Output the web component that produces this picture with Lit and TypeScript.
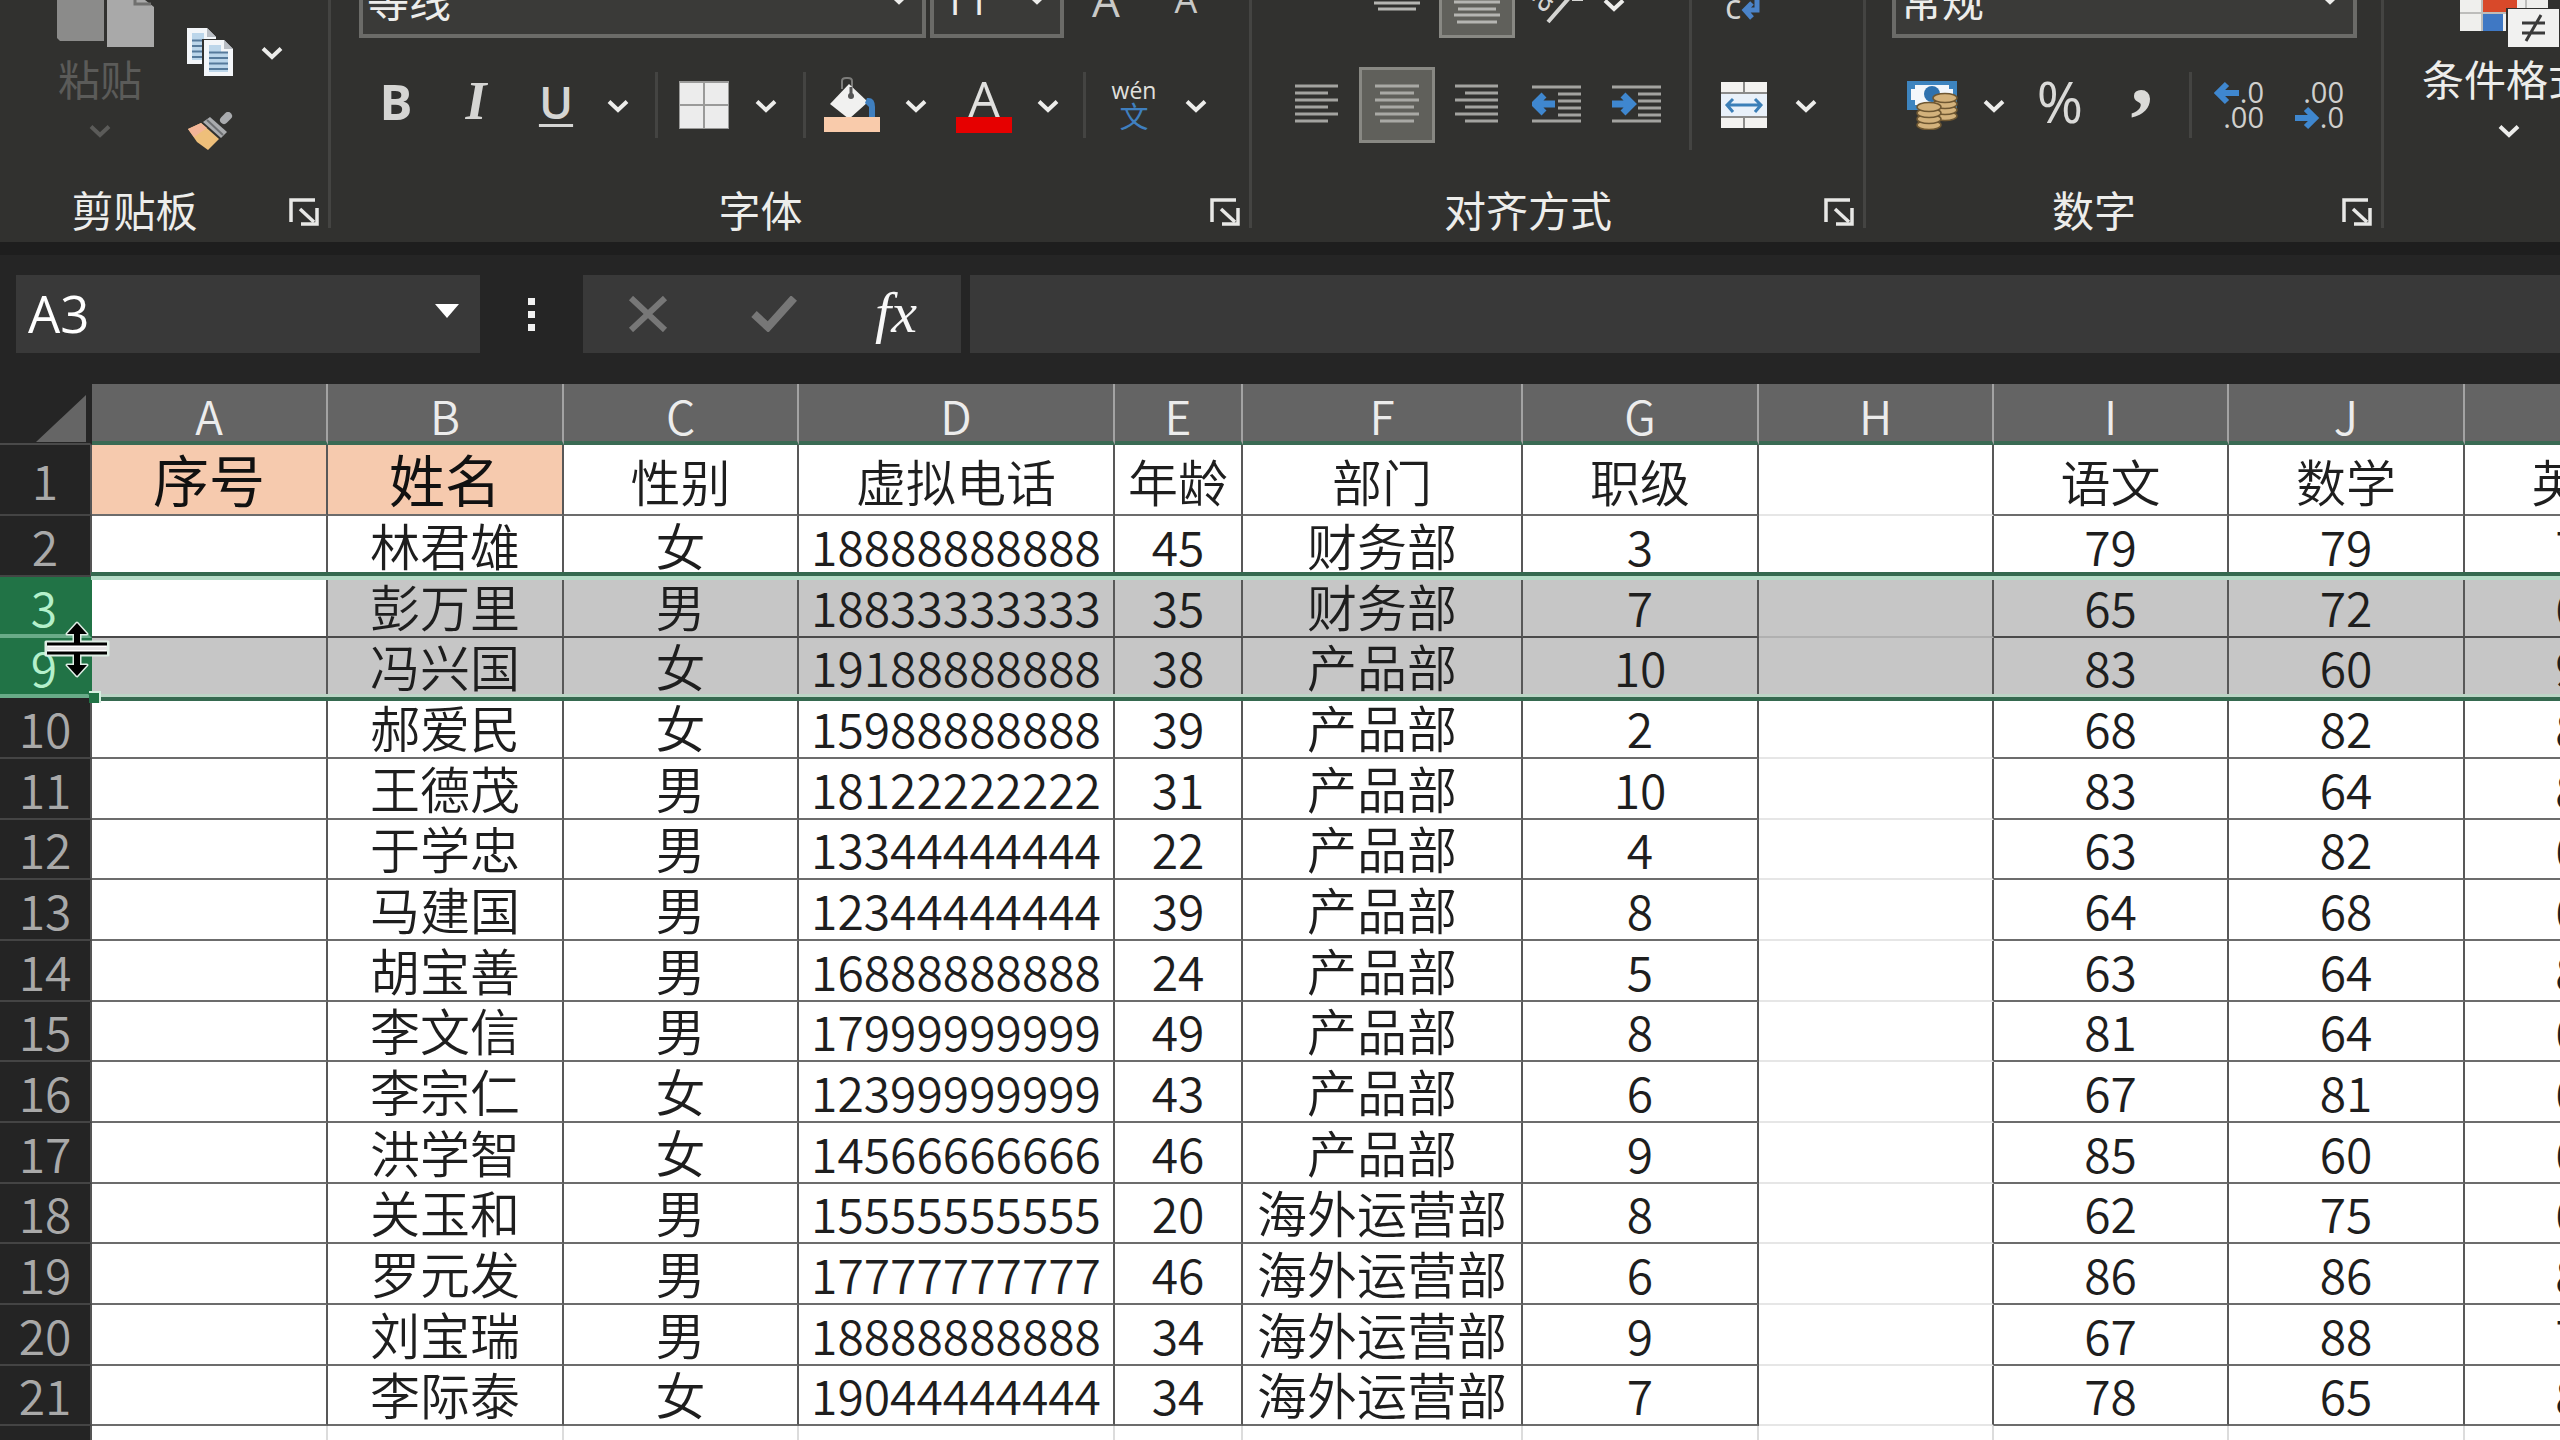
import { LitElement, html, css, svg, nothing } from "lit";
import { customElement } from "lit/decorators.js";
import { classMap } from "lit/directives/class-map.js";

type Row = { n: number; cells: (string | number)[] };

const COLUMNS = ["A", "B", "C", "D", "E", "F", "G", "H", "I", "J", "K"];

const ROWS: Row[] = [
  { n: 1, cells: ["序号", "姓名", "性别", "虚拟电话", "年龄", "部门", "职级", "", "语文", "数学", "英语"] },
  { n: 2, cells: ["", "林君雄", "女", "18888888888", 45, "财务部", 3, "", 79, 79, 74] },
  { n: 3, cells: ["", "彭万里", "男", "18833333333", 35, "财务部", 7, "", 65, 72, 65] },
  { n: 9, cells: ["", "冯兴国", "女", "19188888888", 38, "产品部", 10, "", 83, 60, 90] },
  { n: 10, cells: ["", "郝爱民", "女", "15988888888", 39, "产品部", 2, "", 68, 82, 83] },
  { n: 11, cells: ["", "王德茂", "男", "18122222222", 31, "产品部", 10, "", 83, 64, 82] },
  { n: 12, cells: ["", "于学忠", "男", "13344444444", 22, "产品部", 4, "", 63, 82, 66] },
  { n: 13, cells: ["", "马建国", "男", "12344444444", 39, "产品部", 8, "", 64, 68, 61] },
  { n: 14, cells: ["", "胡宝善", "男", "16888888888", 24, "产品部", 5, "", 63, 64, 85] },
  { n: 15, cells: ["", "李文信", "男", "17999999999", 49, "产品部", 8, "", 81, 64, 67] },
  { n: 16, cells: ["", "李宗仁", "女", "12399999999", 43, "产品部", 6, "", 67, 81, 62] },
  { n: 17, cells: ["", "洪学智", "女", "14566666666", 46, "产品部", 9, "", 85, 60, 68] },
  { n: 18, cells: ["", "关玉和", "男", "15555555555", 20, "海外运营部", 8, "", 62, 75, 64] },
  { n: 19, cells: ["", "罗元发", "男", "17777777777", 46, "海外运营部", 6, "", 86, 86, 81] },
  { n: 20, cells: ["", "刘宝瑞", "男", "18888888888", 34, "海外运营部", 9, "", 67, 88, 73] },
  { n: 21, cells: ["", "李际泰", "女", "19044444444", 34, "海外运营部", 7, "", 78, 65, 84] },
  { n: 22, cells: ["", "", "", "", "", "", "", "", "", "", ""] },
];

const SELECTED = [3, 9];

const icon = (w: number, h: number, body: unknown) =>
  html`<svg class="icon" width=${w} height=${h} viewBox="0 0 ${w} ${h}" aria-hidden="true">${body}</svg>`;

const chevron = () =>
  icon(22, 14, svg`<path d="M2 2.5 L11 11 L20 2.5" fill="none" stroke="currentColor" stroke-width="4"/>`);

const launcherIcon = icon(30, 28, svg`
  <path d="M2 24 V2 H26" fill="none" stroke="#e8e8e6" stroke-width="3.5"/>
  <path d="M11 11 L25 24" stroke="#e8e8e6" stroke-width="3.5"/>
  <path d="M28 10 V26 H12" fill="none" stroke="#e8e8e6" stroke-width="3.5"/>`);

const pasteIcon = icon(98, 48, svg`
  <path d="M0 0 H47 V41 H3 L0 38 Z" fill="#8b8b8a"/>
  <path d="M50 0 H88 L97 7 V47 H50 Z" fill="#a9a9a9"/>
  <path d="M78 0 V4 H94" fill="none" stroke="#70706f" stroke-width="3"/>`);

const page = (x: number, y: number) => svg`
  <path d="M${x} ${y} h20 l9 9 v27 h-29 z" fill="#f3f6f9"/>
  <path d="M${x + 20} ${y} v9 h9 z" fill="#b9bec4"/>
  <path d="M${x + 5} ${y + 5} h12 v7 h7 v20 h-19 z" fill="#bcd6ea"/>
  <path d="M${x + 5} ${y + 12.5} h19 M${x + 5} ${y + 18} h19 M${x + 5} ${y + 23.5} h19 M${x + 5} ${y + 29} h19"
    stroke="#567a9b" stroke-width="2"/>`;

const copyIcon = icon(48, 50, svg`${page(1, 1)}
  <path d="M16 12 h24 l8 8 v30 h-32 z" fill="#31312f"/>${page(18, 13)}`);

const brushIcon = icon(46, 40, svg`
  <path d="M37 8 L41 4" stroke="#a9abae" stroke-width="8" stroke-linecap="round"/>
  <path d="M23 5 L40 20 L34 26 L16 10 Z" fill="#a9abae"/>
  <path d="M20 8 L36 23" stroke="#6d6f72" stroke-width="2"/>
  <path d="M14 11 L32 27 L21 38 L10 30 L1 17 Z" fill="#eebf7a"/>
  <path d="M14 11 L20 16 L7 25 L1 17 Z" fill="#f3b597"/>`);

const bordersIcon = icon(50, 48, svg`
  <rect x="0" y="0" width="50" height="48" fill="#9a9a99"/>
  <rect x="1" y="2" width="23" height="21" fill="#ececec"/><rect x="26" y="2" width="23" height="21" fill="#ececec"/>
  <rect x="1" y="25" width="23" height="22" fill="#ececec"/><rect x="26" y="25" width="23" height="22" fill="#ececec"/>`);

const fillIcon = icon(58, 56, svg`
  <path d="M19 12 V4 Q19 1 23 1 H25 Q29 1 29 4 V14" fill="none" stroke="#7c7c7a" stroke-width="2"/>
  <path d="M26 7 L45 25 L26 42 L7 27 Z" fill="#f1f1f0"/>
  <path d="M28 10 V19" stroke="#555" stroke-width="3"/><circle cx="28" cy="19" r="3" fill="#555"/>
  <path d="M44 21 Q52 20 52 30 V40 H46 V30 L42 26 Z" fill="#3f7fbf"/>
  <rect x="1" y="40" width="56" height="15" fill="#f9cbab"/>`);

const fontColorIcon = icon(58, 56, svg`
  <text class="glyph" x="29" y="40" font-size="50" text-anchor="middle" fill="#e0e0de">A</text>
  <rect x="1" y="40" width="56" height="16" fill="#e60000"/>`);

const phoneticIcon = icon(54, 56, svg`
  <text class="glyph" x="27" y="22" font-size="23" text-anchor="middle" fill="#e0e0de">wén</text>
  <text class="cjk" x="27" y="51" font-size="29" text-anchor="middle" fill="#3f7fbf">文</text>`);

const lines = (w: number, spans: [number, number][], color: string, step = 7) =>
  icon(w, spans.length * step, spans.map(([a, b], i) =>
    svg`<path d="M${a} ${i * step + 2} H${b}" stroke=${color} stroke-width="3"/>`));

const leftLines = lines(44, [[0, 43], [0, 33], [0, 43], [0, 33], [0, 43], [0, 33]], "#a3a3a0");
const centerLines = lines(44, [[0, 44], [5, 39], [0, 44], [5, 39], [0, 44], [5, 39]], "#a9a9a5");
const rightLines = lines(44, [[0, 43], [10, 43], [0, 43], [10, 43], [0, 43], [10, 43]], "#a3a3a0");

const middleLines = icon(46, 76, svg`
  <path d="M0 34 H46 M0 41 H46 M4 47 H42" stroke="#b5b5b2" stroke-width="3"/>`);
const bottomLines = icon(46, 70, svg`
  <path d="M0 37 H46 M4 44 H42 M0 50 H46 M3 57 H43" stroke="#b5b5b2" stroke-width="3"/>`);

const indentIcon = (dir: "left" | "right") => icon(50, 40, svg`
  <path d="M0 2 H49 M26 9 H49 M26 16 H49 M26 23 H49 M26 30 H49 M0 36 H49" stroke="#a3a3a0" stroke-width="3"/>
  ${dir === "left"
    ? svg`<path d="M3 19 H23 M12 10 L3 19 L12 28" fill="none" stroke="#3f87cf" stroke-width="7"/>`
    : svg`<path d="M0 19 H20 M11 10 L20 19 L11 28" fill="none" stroke="#3f87cf" stroke-width="7"/>`}`);

const mergeIcon = icon(46, 46, svg`
  <rect width="46" height="46" fill="#f3f2f0"/>
  <path d="M0 11 H46 M0 35 H46 M23 0 V11 M23 35 V46" stroke="#8b8b8a" stroke-width="2"/>
  <rect y="12" width="46" height="22" fill="#e9f1fa"/>
  <path d="M6 23 H40 M12 17 L6 23 L12 30 M34 17 L40 23 L34 30" fill="none" stroke="#3b7fb8" stroke-width="3"/>`);

const orientIcon = icon(52, 76, svg`
  <text class="glyph" x="12" y="52" font-size="34" fill="#d5d5d3" transform="rotate(-50 12 52)">ab</text>
  <path d="M17 60 L52 20 M41 37 H52" fill="none" stroke="#d5d5d3" stroke-width="4"/>`);

const wrapIcon = icon(46, 76, svg`
  <text class="glyph" x="4" y="57" font-size="34" fill="#d5d5d3">c</text>
  <path d="M36 38 V48 H26 M31 41 L24 48 L31 56" fill="none" stroke="#4b83c9" stroke-width="5"/>`);

const coins = (x: number, y: number) => svg`
  ${[18, 12, 6, 0].map((d) => svg`<ellipse cx=${x} cy=${y + d} rx="12" ry="4.5" fill="#d3b27c" stroke="#6e5732" stroke-width="1.5"/>`)}`;

const currencyIcon = icon(52, 50, svg`
  <rect x="1" y="1" width="50" height="29" fill="#3d84bf"/>
  <path d="M9 5 H43 V9 H47 V20 H43 V25 H9 V20 H5 V9 H9 Z" fill="#f3f7fb"/>
  <ellipse cx="26" cy="14" rx="8" ry="8" fill="#2f72ae"/>
  ${coins(39, 18)}${coins(23, 27)}`);

const percentIcon = icon(52, 50, svg`
  <text class="glyph" x="26" y="43" font-size="56" text-anchor="middle" fill="#dadad8">%</text>`);

const commaIcon = icon(30, 50, svg`
  <text class="serif bold" x="15" y="23" font-size="92" text-anchor="middle" fill="#dadad8">,</text>`);

const decimalIcon = (kind: "more" | "less") => icon(52, 50, svg`
  <text class="glyph" x="50" y="23" font-size="29" text-anchor="end" fill="#cfcfcd">${kind === "more" ? ".0" : ".00"}</text>
  <text class="glyph" x="50" y="48" font-size="29" text-anchor="end" fill="#cfcfcd">${kind === "more" ? ".00" : ".0"}</text>
  <path d=${kind === "more" ? "M4 13 H25 M13 4 L4 13 L13 22" : "M1 38 H21 M12 29 L21 38 L12 47"}
    fill="none" stroke="#3f87cf" stroke-width="6"/>`);

const conditionalIcon = icon(102, 48, svg`
  <rect width="88" height="31" fill="#efefed"/>
  <rect x="23" width="34" height="13" fill="#d8492a"/><rect x="23" y="14" width="20" height="17" fill="#3f78c4"/>
  <path d="M0 13 H47 M22 0 V31 M66 0 V8" stroke="#bdbdbb" stroke-width="2"/>
  <rect x="46" y="8" width="53" height="40" fill="#31312f"/>
  <rect x="48" y="9" width="51" height="38" fill="#f1f1f0"/>
  <path d="M62 23 H85 M62 33 H85 M81 15 L66 41" stroke="#3a3a3a" stroke-width="3"/>`);

const cursorIcon = icon(66, 60, svg`
  <path d="M33 3 L43 14 H36 V22 H64 V35 H36 V45 H43 L33 56 L23 45 H30 V35 H2 V22 H30 V14 H23 Z"
    fill="#fff" stroke="#dfeee5" stroke-width="3" stroke-linejoin="round"/>
  <path d="M33 3 L43 14 H36 V23 H30 V14 H23 Z M33 56 L43 45 H36 V34 H30 V45 H23 Z" fill="#000"/>
  <path d="M3 24 H63 M3 33 H63" stroke="#000" stroke-width="3"/>
  <path d="M3 28.5 H63" stroke="#e6e6e6" stroke-width="3"/>`);

@customElement("ribbon-group")
class RibbonGroup extends LitElement {
  static properties = { label: {}, launcher: { type: Boolean } };
  declare label: string;
  declare launcher: boolean;

  static styles = css`
    :host { display: flex; flex-direction: column; flex: none; border-right: 3px solid #444442; height: 228px; }
    .body { height: 178px; flex: none; }
    .foot { display: flex; align-items: center; height: 62px; margin-bottom: -12px; padding-right: 9px; }
    .name { flex: 1; text-align: center; font-size: 42px; line-height: 62px; color: #ededeb; padding-right: 20px; }
    .launch { border: 0; background: none; padding: 6px 0 0; display: flex; }
    .icon { display: block; }
  `;

  render() {
    return html`<div class="body"><slot></slot></div>
      <div class="foot">
        <span class="name">${this.label}</span>
        ${this.launcher ? html`<button class="launch" aria-label="${this.label}设置">${launcherIcon}</button>` : nothing}
      </div>`;
  }
}

@customElement("app-root")
export class AppRoot extends LitElement {
  static styles = css`
    :host {
      display: flex; flex-direction: column; height: 100vh; overflow: hidden;
      background: #252525; color: #ededeb;
      font-family: "Noto Sans CJK SC", "Noto Sans", sans-serif;
    }
    button { border: 0; background: none; padding: 0; margin: 0; color: inherit; font: inherit; display: flex; align-items: center; justify-content: center; }
    .icon { display: block; flex: none; }
    .glyph { font-family: "Open Sans", "Noto Sans", sans-serif; }
    .cjk { font-family: "Noto Sans CJK SC", sans-serif; }
    .serif { font-family: "Liberation Serif", serif; }
    .bold { font-weight: 700; }

    .ribbon { display: flex; flex: none; height: 242px; overflow: hidden; background: #31312f; border-bottom: 13px solid #1e1e1e; }
    .g-clip { width: 328px; }
    .g-font { width: 918px; }
    .g-align { width: 611px; }
    .g-number { width: 515px; }
    .g-style { width: 230px; border-right: 0; }

    .clip { display: flex; height: 100%; }
    .paste { flex-direction: column; justify-content: flex-start; width: 116px; margin-left: 48px; color: #5b5b59; }
    .paste .cap, .cond .cap { font-size: 42px; line-height: 60px; }
    .paste .cap, .paste .chev { margin-right: 12px; }
    .paste .chev, .cond .chev { height: 14px; padding-top: 16px; }
    .clip-tools { display: grid; grid-template-columns: 92px 32px; grid-template-rows: 80px 80px; padding-top: 12px; place-items: center; align-content: start; }

    .top { display: flex; align-items: flex-end; height: 38px; }
    .tools { display: grid; align-items: center; justify-items: center; height: 76px; margin-top: 29px; }
    .font-body { padding-left: 28px; }
    .font-body .top { gap: 4px; }
    .font-tools { margin-left: -3px; grid-template-columns: 80px 80px 80px 44px 32px 64px 60px 16px 80px 48px 88px 40px 32px 68px 56px; }
    .num-body { padding-left: 26px; }
    .num-tools { grid-template-columns: 80px 44px 88px 76px 20px 80px 80px; }
    .align-body { display: flex; padding-left: 25px; }
    .align-tools { grid-template-columns: repeat(5, 80px); }
    .merge-tools { grid-template-columns: 80px 44px; }
    .vsep { width: 3px; height: 66px; background: #444442; }
    .vsep.tall { height: 150px; margin: 0 12px; }

    .combo { display: grid; align-items: center; height: 76px; box-sizing: border-box; border: 4px solid #6b6b68; background: #3a3a38; }
    .combo select { grid-area: 1 / 1; width: 100%; height: 68px; appearance: none; border: 0; background: none; color: #ededeb; font: inherit; font-size: 42px; padding: 0 0 4px 4px; }
    .combo .icon { grid-area: 1 / 1; justify-self: end; margin: 0 12px 4px 0; pointer-events: none; }
    .c-face { width: 567px; }
    .c-size { width: 134px; }
    .c-size select { font-family: "Open Sans", sans-serif; padding-left: 8px; }
    .c-num { width: 465px; }
    .grow, .shrink { width: 76px; height: 76px; font-family: "Open Sans", sans-serif; color: #c9c9c7; line-height: 60px; }
    .grow { font-size: 44px; }
    .shrink { font-size: 36px; line-height: 64px; }

    .t { width: 76px; height: 76px; }
    .t.on { box-sizing: border-box; border: 3px solid #888883; background: #60605b; }
    .slot { width: 80px; height: 76px; display: flex; align-items: center; justify-content: center; }
    .letter { font-family: "Open Sans", sans-serif; font-size: 49px; line-height: 64px; padding-bottom: 8px; color: #d5d5d3; }
    .letter.i { font-family: "Liberation Serif", serif; font-style: italic; font-weight: 700; font-size: 54px; padding-bottom: 8px; }
    .letter.u { font-weight: 600; text-decoration: underline; text-decoration-thickness: 3px; text-underline-offset: 5px; font-size: 46px; }
    .chev { height: 64px; padding-top: 2px; }
    .top .chev { padding: 0 6px 2px; }

    .cond { flex-direction: column; justify-content: flex-start; align-items: flex-start; padding-left: 38px; width: 230px; white-space: nowrap; }
    .cond .icon { margin-left: 38px; }
    .cond .chev .icon { margin-left: 76px; }

    .formula { display: flex; flex: none; height: 78px; padding: 20px 0 31px 16px; }
    .namebox { display: flex; align-items: center; justify-content: space-between; width: 464px; background: #393939; }
    .namebox input { flex: 1; min-width: 0; border: 0; background: none; color: #fff; font-family: "Open Sans", sans-serif; font-size: 51px; line-height: 64px; padding: 0 0 2px 12px; height: 78px; box-sizing: border-box; }
    .namebox button { width: 48px; padding: 0 18px 6px 0; height: 70px; }
    .grip { display: grid; gap: 6px; width: 103px; justify-content: center; align-content: center; }
    .grip i { width: 7px; height: 7px; background: #f1f1f1; }
    .fx { display: grid; grid-template-columns: repeat(3, 126px); background: #393939; color: #777; }
    .fx button { padding-left: 4px; }
    .fx .f { font-family: "Liberation Serif", serif; font-style: italic; font-size: 58px; line-height: 64px; color: #f8f8f8; padding: 0 4px 2px 0; }
    .bar { flex: 1; min-width: 0; margin-left: 9px; border: 0; background: #393939; color: #fff; font: inherit; font-size: 42px; }

    .sheet { position: relative; flex: 1; min-height: 0; overflow: hidden; background: #fff; }
    table { table-layout: fixed; width: 2699px; border-collapse: separate; border-spacing: 0; }
    col.rh { width: 92px; }
    col.w235 { width: 235px; }
    col.w236 { width: 236px; }
    col.w316 { width: 316px; }
    col.w128 { width: 128px; }
    col.w280 { width: 280px; }
    th, td { box-sizing: border-box; padding: 0; text-align: center; font-weight: 350; white-space: nowrap; line-height: 50px; }
    thead th { height: 61px; padding-top: 5px; background: #646464; color: #ececec; font-size: 46px; border-right: 2px solid #a3a3a3; border-bottom: 4px solid #3a6a54; }
    thead th.corner { padding: 0 4px 1px 0; background: #252525; border-bottom: 2px solid #4a4a4a; border-right: 2px solid #252525; vertical-align: bottom; }
    .corner .icon { margin-left: auto; }
    tbody th { background: #242424; color: #a9a9a9; font-size: 48px; border-right: 2px solid #555; border-bottom: 2px solid #444; padding-bottom: 2px; }
    tbody td { color: #1e1e1e; font-size: 48px; border-right: 2px solid #585858; border-bottom: 2px solid #6c6c6c; padding-bottom: 2px; }
    tbody td.han { font-size: 50px; padding-bottom: 4px; }
    tbody tr { height: 61px; }
    tbody tr:nth-child(3n + 1) { height: 60px; }
    tbody tr:first-child { height: 71px; }
    tbody td.head { padding-bottom: 0; }
    tbody td.key { background: #f6caae; font-size: 56px; font-weight: 400; color: #111; padding-bottom: 4px; }
    tbody td.gap { border-bottom-color: #e6e6e6; }
    tr.sel td { background: #c6c6c6; border-bottom-color: #4a4a4a; }
    tr.sel td.gap { border-bottom-color: #b0b0b0; }
    tr.sel td.active { background: #fff; }
    tr.sel th { background: #217346; color: #b4f0cb; border-right: 4px solid #217346; border-bottom: 4px solid #69ab88; padding-bottom: 0; }
    tr.blank td { border-color: #dcdcdc; }

    .range { position: absolute; left: 91px; right: 0; top: 188px; height: 121px; border: solid #35694f; border-width: 4px 0; box-shadow: inset 0 4px #b4dbc6, inset 0 -3px #bcd5c6; pointer-events: none; }
    .handle { position: absolute; left: -2px; bottom: -6px; width: 12px; height: 12px; background: #217346; border: solid #d5efe0; border-width: 2px 2px 0 0; box-sizing: border-box; }
    .cursor { position: absolute; left: 44px; top: 236px; pointer-events: none; }
  `;

  private chev(label: string) {
    return html`<button class="chev" aria-label=${label}>${chevron()}</button>`;
  }

  private tool(label: string, body: unknown, on = false) {
    return html`<button class=${classMap({ t: true, on })} aria-label=${label} aria-pressed=${on}>${body}</button>`;
  }

  private combo(cls: string, label: string, value: string) {
    return html`<label class="combo ${cls}"><select aria-label=${label}><option>${value}</option></select>${chevron()}</label>`;
  }

  private ribbon() {
    return html`<div class="ribbon">
      <ribbon-group class="g-clip" label="剪贴板" launcher>
        <div class="clip">
          <button class="paste">${pasteIcon}<span class="cap">粘贴</span><span class="chev">${chevron()}</span></button>
          <div class="clip-tools">
            <button aria-label="复制">${copyIcon}</button>${this.chev("复制选项")}
            <button aria-label="格式刷">${brushIcon}</button>
          </div>
        </div>
      </ribbon-group>

      <ribbon-group class="g-font" label="字体" launcher>
        <div class="font-body">
          <div class="top">
            ${this.combo("c-face", "字体名称", "等线")}
            ${this.combo("c-size", "字号", "11")}
            <button class="grow" aria-label="增大字号">A</button>
            <button class="shrink" aria-label="减小字号">A</button>
          </div>
          <div class="tools font-tools">
            <button class="letter bold">B</button>
            <button class="letter i">I</button>
            <button class="letter u">U</button>${this.chev("下划线选项")}
            <span class="vsep"></span>
            ${this.tool("边框", bordersIcon)}${this.chev("边框选项")}
            <span class="vsep"></span>
            ${this.tool("填充颜色", fillIcon)}${this.chev("填充颜色选项")}
            ${this.tool("字体颜色", fontColorIcon)}${this.chev("字体颜色选项")}
            <span class="vsep"></span>
            ${this.tool("拼音", phoneticIcon)}${this.chev("拼音选项")}
          </div>
        </div>
      </ribbon-group>

      <ribbon-group class="g-align" label="对齐方式" launcher>
        <div class="align-body">
          <div>
            <div class="top">
              <span class="slot"></span>
              <span class="slot">${this.tool("垂直居中", middleLines)}</span>
              <span class="slot">${this.tool("底端对齐", bottomLines, true)}</span>
              <span class="slot">${this.tool("方向", orientIcon)}</span>
              ${this.chev("方向选项")}
            </div>
            <div class="tools align-tools">
              ${this.tool("左对齐", leftLines)}
              ${this.tool("居中", centerLines, true)}
              ${this.tool("右对齐", rightLines)}
              ${this.tool("减少缩进量", indentIcon("left"))}
              ${this.tool("增加缩进量", indentIcon("right"))}
            </div>
          </div>
          <span class="vsep tall"></span>
          <div>
            <div class="top"><span class="slot">${this.tool("自动换行", wrapIcon)}</span></div>
            <div class="tools merge-tools">${this.tool("合并后居中", mergeIcon)}${this.chev("合并选项")}</div>
          </div>
        </div>
      </ribbon-group>

      <ribbon-group class="g-number" label="数字" launcher>
        <div class="num-body">
          <div class="top">${this.combo("c-num", "数字格式", "常规")}</div>
          <div class="tools num-tools">
            ${this.tool("会计数字格式", currencyIcon)}${this.chev("会计数字格式选项")}
            ${this.tool("百分比样式", percentIcon)}
            ${this.tool("千位分隔样式", commaIcon)}
            <span class="vsep"></span>
            ${this.tool("增加小数位数", decimalIcon("more"))}
            ${this.tool("减少小数位数", decimalIcon("less"))}
          </div>
        </div>
      </ribbon-group>

      <ribbon-group class="g-style" label="">
        <button class="cond">${conditionalIcon}<span class="cap">条件格式</span><span class="chev">${chevron()}</span></button>
      </ribbon-group>
    </div>`;
  }

  private formulaBar() {
    return html`<div class="formula">
      <div class="namebox">
        <input aria-label="名称框" value="A3" />
        <button aria-label="名称列表">${icon(24, 14, svg`<path d="M0 0 H24 L12 14 Z" fill="#fff"/>`)}</button>
      </div>
      <div class="grip"><i></i><i></i><i></i></div>
      <div class="fx">
        <button aria-label="取消">${icon(40, 36, svg`<path d="M3 2 L37 34 M37 2 L3 34" stroke="#777" stroke-width="6"/>`)}</button>
        <button aria-label="输入">${icon(46, 36, svg`<path d="M3 18 L17 31 L43 2" fill="none" stroke="#777" stroke-width="8"/>`)}</button>
        <button class="f" aria-label="插入函数">fx</button>
      </div>
      <input class="bar" aria-label="编辑栏" />
    </div>`;
  }

  private row(r: Row) {
    const sel = SELECTED.includes(r.n);
    return html`<tr class=${classMap({ sel, blank: r.n === 22 })}>
      <th scope="row">${r.n}</th>
      ${r.cells.map((v, i) => html`<td class=${classMap({
        han: typeof v === "string" && !/^\d*$/.test(v),
        head: r.n === 1,
        key: r.n === 1 && i < 2,
        gap: COLUMNS[i] === "H",
        active: r.n === 3 && i === 0,
      })}>${v}</td>`)}
    </tr>`;
  }

  private sheet() {
    const widths = ["w236", "w236", "w235", "w316", "w128", "w280", "w236", "w235", "w235", "w236", "w235"];
    return html`<div class="sheet">
      <table>
        <colgroup><col class="rh" />${widths.map((w) => html`<col class=${w} />`)}</colgroup>
        <thead><tr>
          <th class="corner">${icon(50, 47, svg`<path d="M50 0 V47 H0 Z" fill="#656565"/>`)}</th>
          ${COLUMNS.map((c) => html`<th scope="col">${c}</th>`)}
        </tr></thead>
        <tbody>${ROWS.map((r) => this.row(r))}</tbody>
      </table>
      <div class="range"><span class="handle"></span></div>
      <div class="cursor">${cursorIcon}</div>
    </div>`;
  }

  render() {
    return html`${this.ribbon()}${this.formulaBar()}${this.sheet()}`;
  }
}
